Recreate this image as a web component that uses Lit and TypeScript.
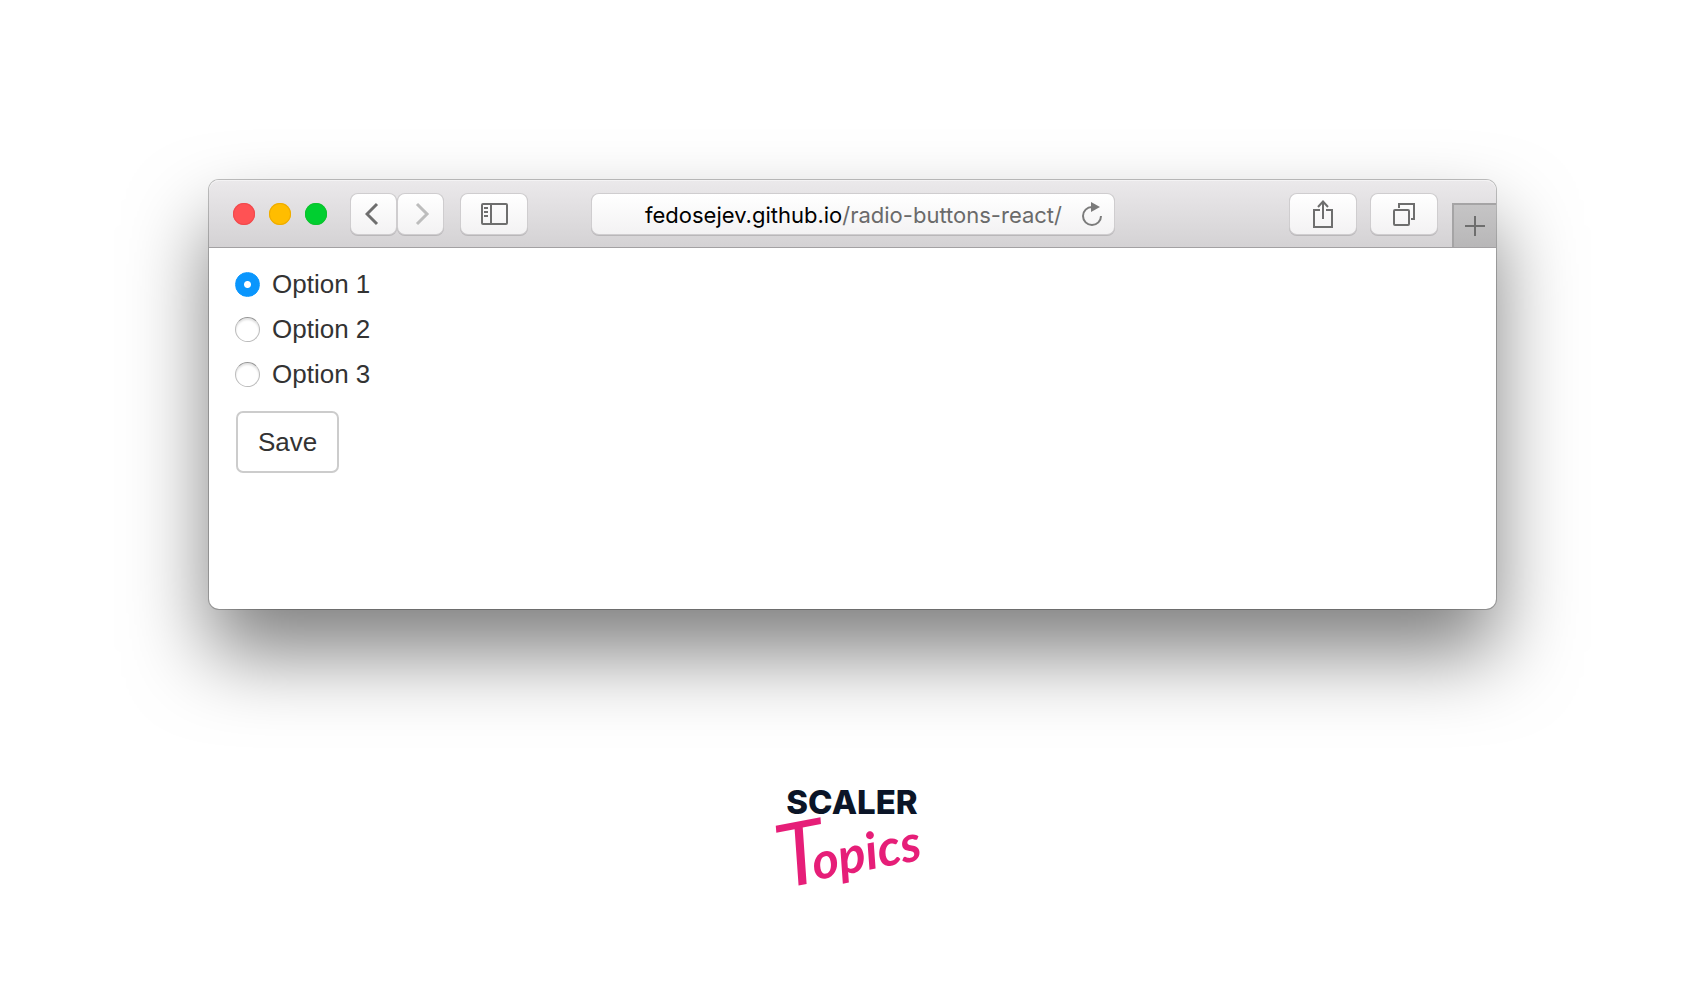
import { LitElement, html, css } from "lit";
import { customElement, state } from "lit/decorators.js";

@customElement("browser-toolbar")
class BrowserToolbar extends LitElement {
  static styles = css`
    :host {
      display: block;
    }
    .bar {
      display: flex;
      align-items: center;
      height: 67px;
      border-bottom: 1px solid #a3a1a3;
      border-radius: 10px 10px 0 0;
      background: linear-gradient(#ebe9eb, #d4d2d4);
      box-shadow: inset 0 1px 0 #f4f3f4;
    }
    button {
      display: grid;
      place-items: center;
      margin: 0;
      padding: 0;
      border: 0;
      background: none;
      font: inherit;
      color: #6e6e6e;
    }
    svg {
      display: block;
      fill: none;
      stroke: currentColor;
      stroke-width: 2;
    }
    .side {
      display: flex;
      flex: 1 1 0;
      align-items: center;
    }
    .end {
      justify-content: flex-end;
      align-self: stretch;
      gap: 15px;
    }
    .lights {
      display: flex;
      gap: 14px;
      margin: 0 24px;
    }
    .light {
      width: 22px;
      height: 22px;
      border-radius: 50%;
    }
    .close {
      background: #ff5254;
      box-shadow: inset 0 0 0 1px #f04b4e;
    }
    .minimise {
      background: #ffbd00;
      box-shadow: inset 0 0 0 1px #eeac00;
    }
    .zoom {
      background: #00cf30;
      box-shadow: inset 0 0 0 1px #0dc22e;
    }
    .key,
    .address {
      height: 40px;
      border-radius: 7px;
      background: linear-gradient(#ffffff, #f3f2f3);
      box-shadow: 0 0 0 1px #cfcdcf, 0 1px 0 1px #b9b7b9;
    }
    .key {
      width: 66px;
    }
    .nav {
      display: flex;
      gap: 2px;
      margin-right: 18px;
    }
    .nav .key {
      width: 45px;
    }
    .nav .key:disabled {
      color: #bdbdbd;
    }
    .chevron {
      stroke-width: 3;
    }
    .address {
      display: flex;
      flex: 0 1 522px;
      align-items: center;
      min-width: 0;
    }
    .url {
      flex: 1;
      min-width: 0;
      padding: 2px 0 0 44px;
      font: 22px/38px Inter, Roboto, "Liberation Sans", sans-serif;
      color: #6a6a6a;
      white-space: nowrap;
    }
    .domain {
      color: #000000;
    }
    .reload {
      width: 40px;
      height: 40px;
      margin-right: 2px;
      color: #7b7b7b;
    }
    .add {
      align-self: flex-end;
      width: 44px;
      height: 44px;
      border-top: 2px solid #a5a4a5;
      border-left: 2px solid #a5a4a5;
      background: linear-gradient(#c5c4c5, #b8b7b8);
    }
  `;

  render() {
    return html`
      <header class="bar">
        <div class="side">
          <div class="lights">
            <button class="light close" aria-label="Close"></button>
            <button class="light minimise" aria-label="Minimise"></button>
            <button class="light zoom" aria-label="Zoom"></button>
          </div>
          <nav class="nav" aria-label="History">
            <button class="key" aria-label="Back">
              <svg class="chevron" width="18" height="24" viewBox="0 0 18 24">
                <path d="M12 2 2 12l10 10" />
              </svg>
            </button>
            <button class="key" aria-label="Forward" disabled>
              <svg class="chevron" width="18" height="24" viewBox="0 0 18 24">
                <path d="m5 2 10 10L5 22" />
              </svg>
            </button>
          </nav>
          <button class="key" aria-label="Sidebar">
            <svg width="28" height="24" viewBox="0 0 28 24">
              <rect x="2" y="2" width="25" height="20" rx="1" />
              <path d="M11 2v20" />
              <path d="M4 6h4M4 10h4M4 14h4" />
            </svg>
          </button>
        </div>

        <div class="address">
          <button class="url" aria-label="Address"><span><span class="domain">fedosejev.github.io</span>/radio-buttons-react/</span></button>
          <button class="reload" aria-label="Reload">
            <svg width="24" height="26" viewBox="0 0 24 26">
              <path d="M12 6a9 9 0 1 0 9 9" />
              <path d="M11 1l9 5-9 5z" fill="currentColor" stroke="none" />
            </svg>
          </button>
        </div>

        <div class="side end">
          <button class="key" aria-label="Share">
            <svg width="22" height="30" viewBox="0 0 22 30">
              <path d="M8 11H2v17h18V11h-6" />
              <path d="M11 20V3M6 8l5-5.500L16 8" />
            </svg>
          </button>
          <button class="key" aria-label="Show all tabs">
            <svg width="24" height="24" viewBox="0 0 24 24">
              <rect x="2" y="8" width="15" height="15" rx="1" />
              <path d="M7 6V2h15v15h-3" />
            </svg>
          </button>
          <button class="add" aria-label="New tab">
            <svg width="20" height="20" viewBox="0 0 20 20">
              <path d="M10 0v20M0 10h20" />
            </svg>
          </button>
        </div>
      </header>
    `;
  }
}

@customElement("option-form")
class OptionForm extends LitElement {
  static styles = css`
    :host {
      display: block;
      color: #333333;
      font: 26px/30px "Liberation Sans", Arial, sans-serif;
    }
    .form {
      display: flex;
      flex-direction: column;
      align-items: flex-start;
      gap: 15px;
      padding: 21px 26px;
    }
    .option {
      display: flex;
      align-items: center;
      gap: 12px;
    }
    .dot {
      appearance: none;
      width: 25px;
      height: 25px;
      margin: 0;
      border: 1px solid #bcbcbc;
      border-top-color: #979797;
      border-radius: 50%;
      background: #ffffff;
      box-shadow: inset 0 2px 2px #e2e2e2;
    }
    .dot:checked {
      border-color: #0a96fd;
      background: radial-gradient(circle, #ffffff 3px, #0a96fd 4px);
      box-shadow: none;
    }
    .save {
      margin: 7px 0 0 1px;
      padding: 14px 20px;
      border: 2px solid #cccccc;
      border-radius: 7px;
      background: #ffffff;
      color: inherit;
      font: inherit;
    }
  `;

  @state() private selected = "Option 1";

  private options = ["Option 1", "Option 2", "Option 3"];

  render() {
    return html`
      <form class="form" @submit=${(e: Event) => e.preventDefault()}>
        ${this.options.map(
          (name) => html`
            <label class="option">
              <input
                class="dot"
                type="radio"
                name="option"
                .value=${name}
                .checked=${this.selected === name}
                @change=${() => (this.selected = name)}
              />
              <span>${name}</span>
            </label>
          `
        )}
        <button class="save" type="submit">Save</button>
      </form>
    `;
  }
}

@customElement("app-root")
class AppRoot extends LitElement {
  static styles = css`
    :host {
      display: flex;
      flex-direction: column;
      align-items: center;
      box-sizing: border-box;
      min-height: 100vh;
      padding: 180px 210px 64px 209px;
      background: #ffffff;
    }
    .window {
      align-self: stretch;
      border-radius: 10px;
      background: #ffffff;
      box-shadow: 0 0 0 1px rgba(0, 0, 0, 0.24), 0 44px 80px rgba(0, 0, 0, 0.5);
    }
    .page {
      min-height: 361px;
    }
    .logo {
      display: block;
      margin-top: 171px;
      overflow: visible;
    }
    .name {
      fill: #0b1527;
      font: 800 33px Inter, "Noto Sans", sans-serif;
    }
    .script {
      fill: #e61e78;
      font: italic 700 51px Lato, sans-serif;
    }
    .initial {
      font-size: 88px;
      font-weight: 400;
    }
  `;

  render() {
    return html`
      <main class="window">
        <browser-toolbar></browser-toolbar>
        <div class="page"><option-form></option-form></div>
      </main>
      <svg class="logo" width="160" height="130" viewBox="0 0 160 130" role="img" aria-label="Scaler Topics">
        <text class="name" x="79" y="34" text-anchor="middle">SCALER</text>
        <g transform="rotate(-11 18 107)">
          <text class="script initial" x="9" y="107">T</text>
          <text class="script" x="43" y="105">opics</text>
        </g>
      </svg>
    `;
  }
}
